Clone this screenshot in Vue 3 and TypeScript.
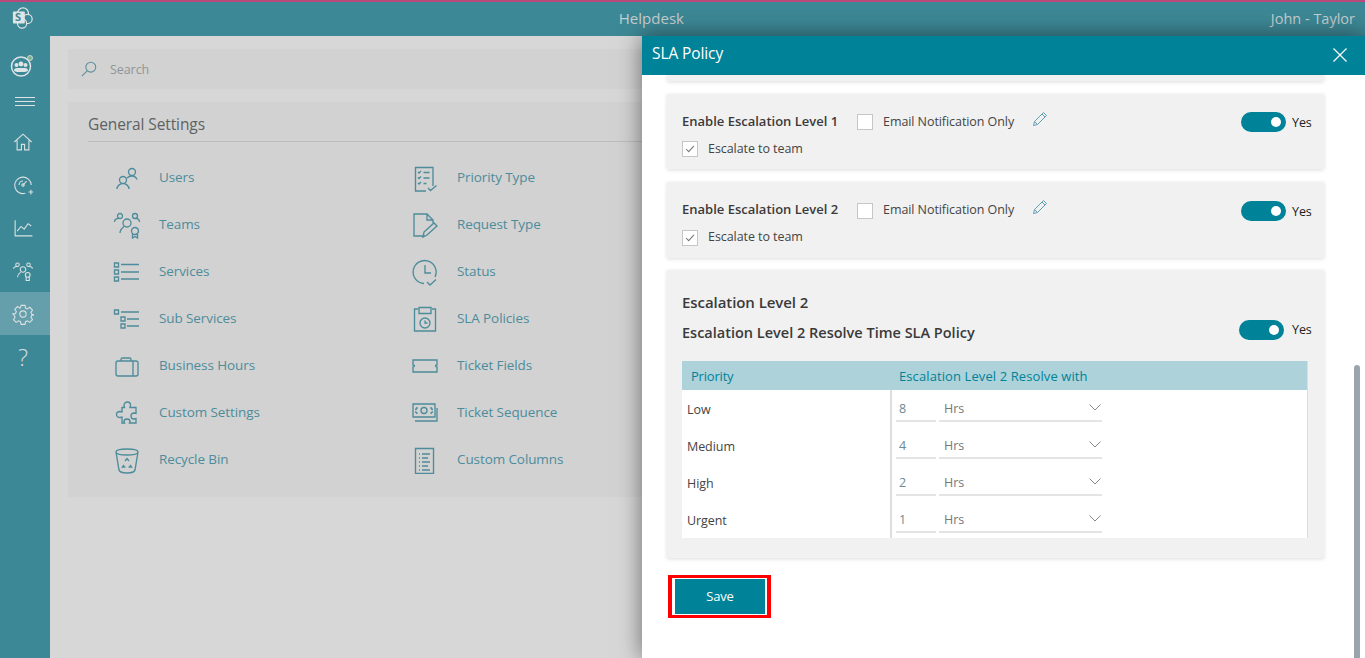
<script setup lang="ts">
/**
 * Helpdesk settings page with the SLA Policy side panel open.
 * Icons are plain stroked paths on a 28x28 box.
 */

interface SettingItem {
  label: string;
  icon: string;
}

interface PriorityRow {
  label: string;
  value: string;
}

const circle = (cx: number, cy: number, r: number): string =>
  `M${cx - r} ${cy}a${r} ${r} 0 1 0 ${r * 2} 0a${r} ${r} 0 1 0 ${-r * 2} 0`;

const navIcons: string[] = [
  // home
  'M3 14 14 4l11 10M6.500 12v12h5.500v-7h4v7h5.500V12',
  // gauge with plus
  `M17 24.500A10.500 10.500 0 1 1 24.500 14M14 14l4.500-5M9 14a5 5 0 0 1 5-5M21 23h6M24 20v6${circle(14, 14, 1.5)}`,
  // chart
  'M4 4v20h22M6.500 18l5-6 4 3.500 5-7 4 3',
  // teams
  `${circle(14, 12, 3.5)}${circle(7, 6, 2.2)}${circle(21, 6, 2.2)}M2 11c0-2 2-3 5-2.500M26 11c0-2-2-3-5-2.500M7 22c0-3 2-5 4-6.500${circle(20, 19, 3)}M18 22v4h4v-4`
];

const leftItems: SettingItem[] = [
  { label: 'Users', icon: `${circle(19, 8, 3.5)}${circle(10, 16, 3.5)}M14 14c1-1 3-2 5-2s4 1 5 3.500M4 25c0-3 3-5.500 6-5.500s6 2.500 6 5.500` },
  { label: 'Teams', icon: `${circle(14, 12, 4)}${circle(7, 5, 2.5)}${circle(22, 5, 2.5)}M1.500 11c0-3 2.500-4 5.500-3.500M26.500 11c0-3-2.500-4-5.500-3.500M7 22c0-3 2-5 4-6.500${circle(22, 20, 3.5)}M19.500 23v4l2.500-1.500 2.500 1.500v-4` },
  { label: 'Services', icon: 'M1.500 5h4v4h-4zM1.500 12h4v4h-4zM1.500 19h4v4h-4zM8 6.500h18M8 14h18M8 21h18' },
  { label: 'Sub Services', icon: 'M1.500 5h4v4h-4zM8 12h4v4H8zM8 19h4v4H8zM8 7h18M14 14h12M14 21h12' },
  { label: 'Business Hours', icon: 'M5 9h18a2 2 0 0 1 2 2v11a2 2 0 0 1-2 2H5a2 2 0 0 1-2-2V11a2 2 0 0 1 2-2zM8 9V7.500C8 6.500 8.500 6 9.500 6h7c1 0 1.500.5 1.500 1.500V9M20 9v15' },
  { label: 'Custom Settings', icon: 'M11 6.500c0-2 1.500-3.500 3.500-3.500s3 1.500 3 3.500l-.5 2h6v6l-2-.5c-2 0-3 1.500-3 3s1 3 3 3l2-.5v4.500h-6.500l.5-1.500c0-1.500-1-2.500-3-2.500s-3 1-3 2.500l.5 1.500H9v-6l-2 .5c-2 0-3.500-1-3.500-3s1.500-3 3.500-3l2 .5V8.500h2.500z' },
  { label: 'Recycle Bin', icon: 'M3 6c0-2 5-3 11-3s11 1 11 3-5 3-11 3S3 8 3 6zM3 6l3 18c.5 2 3 3 8 3s7.500-1 8-3l3-18M12 15l2-2.500 2 2.500M11 19l-1.500 2h3M17 19l1.500 2h-3' }
];

const rightItems: SettingItem[] = [
  { label: 'Priority Type', icon: 'M22 22V3.500H4.500V27H15M7 8l1 1 2-2M12.500 8.500h6M7 13.500l1 1 2-2M12.500 14h6M7 19l1 1 2-2M12.500 19.500h3M17 24l2.500 2.500 6-5' },
  { label: 'Request Type', icon: 'M14 25H3V3h13l6 6v3M16 3v6h6M12 26l1-5 10-9 3 3-10 9z' },
  { label: 'Status', icon: 'M24 19A11.500 11.500 0 1 0 13 25.500M14 7v8h6M16 24l3 3 6-5.500' },
  { label: 'SLA Policies', icon: 'M7 4H3.500v22h21V4H21M8 2.500h12v6H8z' + circle(14, 18, 5) + 'M14 15.500V18h2.500' },
  { label: 'Ticket Fields', icon: 'M2 8h24v5c-1 .2-1.500.5-1.500 1s.5.8 1.500 1v5H2v-5c1-.2 1.500-.5 1.500-1S3 13.200 2 13z' },
  { label: 'Ticket Sequence', icon: 'M2 5h22v13H2zM26 9v13H4M6 8c0 1.500-1 2.500-2 2.500M20 8c0 1.500 1 2.500 2 2.500M6 15c0-1.500-1-2-2-2M20 15c0-1.500 1-2 2-2' + circle(13, 11.5, 3) },
  { label: 'Custom Columns', icon: 'M4.500 2.500h18v25h-18zM8 8h1M11 8h8M8 12h1M11 12h6M8 16h1M11 16h8M8 20h1M11 20h6M8 24h1M11 24h8' }
];

const escalationLevels: number[] = [1, 2];

const priorityRows: PriorityRow[] = [
  { label: 'Low', value: '8' },
  { label: 'Medium', value: '4' },
  { label: 'High', value: '2' },
  { label: 'Urgent', value: '1' }
];
</script>

<template>
  <div class="page">
    <aside class="sidebar">
      <div class="logo">
        <svg class="logo-mark" viewBox="0 0 24 24">
          <circle cx="12" cy="7" r="6" />
          <circle cx="17" cy="13" r="5" />
          <circle cx="11" cy="18" r="5" />
          <rect x="1" y="5" width="13" height="13" rx="1" />
        </svg>
        <span class="logo-letter">S</span>
      </div>

      <div class="group-btn">
        <svg viewBox="0 0 24 24" width="24" height="24">
          <circle class="line" cx="11" cy="12.500" r="9.500" />
          <circle class="solid" cx="6.500" cy="11" r="2" />
          <circle class="solid" cx="15.500" cy="11" r="2" />
          <circle class="solid" cx="11" cy="10" r="2.400" />
          <path class="solid" d="M4 17c0-2 1-3 3-3h8c2 0 3 1 3 3l-3 1H7z" />
          <circle class="dot" cx="20" cy="4" r="2.500" />
        </svg>
      </div>

      <div class="burger"><span /><span /><span /></div>

      <nav class="nav">
        <div v-for="(d, idx) in navIcons" :key="idx" class="nav-item">
          <svg viewBox="0 0 28 28" width="22" height="22"><path :d="d" /></svg>
        </div>
        <div class="nav-item active">
          <svg viewBox="0 0 28 28" width="22" height="22">
            <circle cx="14" cy="14" r="4" />
            <path d="M11.500 3h5l.7 3.500 2.400 1 3-2 3.500 3.500-2 3 1 2.400 3.500.7v0l-3.500.7-1 2.400 2 3-3.500 3.500-3-2-2.400 1-.7 3.500h-5l-.7-3.500-2.400-1-3 2-3.500-3.500 2-3-1-2.400L1 14l3.500-.7 1-2.400-2-3L7 4.500l3 2 .8-.3z" />
          </svg>
        </div>
        <div class="nav-item help">?</div>
      </nav>
    </aside>

    <div class="main">
      <header class="topbar">
        <div class="app-title">Helpdesk</div>
        <div class="user">John - Taylor</div>
      </header>

      <div class="content">
        <div class="search">
          <svg viewBox="0 0 20 20" width="18" height="18">
            <circle cx="12" cy="8" r="5.500" />
            <path d="M8 12 2 18" />
          </svg>
          <span>Search</span>
        </div>

        <section class="settings">
          <h2>General Settings</h2>
          <div class="settings-grid">
            <ul class="settings-col">
              <li v-for="item in leftItems" :key="item.label">
                <svg viewBox="0 0 28 28" width="28" height="28"><path :d="item.icon" /></svg>
                <span>{{ item.label }}</span>
              </li>
            </ul>
            <ul class="settings-col">
              <li v-for="item in rightItems" :key="item.label">
                <svg viewBox="0 0 28 28" width="28" height="28"><path :d="item.icon" /></svg>
                <span>{{ item.label }}</span>
              </li>
            </ul>
          </div>
        </section>
      </div>
    </div>

    <!-- SLA Policy side panel -->
    <div class="panel">
      <div class="panel-head">
        <span class="panel-title">SLA Policy</span>
        <svg viewBox="0 0 14 14" width="14" height="14"><path d="M.5.500l13 13M13.500.500l-13 13" /></svg>
      </div>

      <div class="panel-body">
        <div class="card card-cut" />

        <div
          v-for="level in escalationLevels"
          :key="level"
          class="card level-card"
          :class="{ second: level === 2 }"
        >
          <div class="level-row">
            <strong class="level-name">Enable Escalation Level {{ level }}</strong>
            <span class="checkbox" />
            <span class="check-label">Email Notification Only</span>
            <svg class="pencil" viewBox="0 0 16 16" width="16" height="16">
              <path d="M1.500 14.500l1-4L11.500 1.500l3 3-9 9zM10 3l3 3M2.500 10.500l3 3" />
            </svg>
            <div class="switch-wrap">
              <span class="switch" /><span class="yes">Yes</span>
            </div>
          </div>
          <div class="team-row">
            <span class="checkbox checked">
              <svg viewBox="0 0 16 16" width="14" height="14"><path d="M3.500 8l3 3 6-6.500" /></svg>
            </span>
            <span class="check-label">Escalate to team</span>
          </div>
        </div>

        <div class="card resolve-card">
          <h3>Escalation Level 2</h3>
          <div class="resolve-row">
            <strong class="resolve-name">Escalation Level 2 Resolve Time SLA Policy</strong>
            <div class="switch-wrap">
              <span class="switch" /><span class="yes wide">Yes</span>
            </div>
          </div>

          <div class="table">
            <div class="table-head">
              <span>Priority</span>
              <span class="resolve-with">Escalation Level 2 Resolve with</span>
            </div>
            <div v-for="row in priorityRows" :key="row.label" class="table-row">
              <div class="cell-label">{{ row.label }}</div>
              <div class="cell-values">
                <div class="num-input">{{ row.value }}</div>
                <div class="select">
                  <span>Hrs</span>
                  <svg viewBox="0 0 12 7" width="12" height="7"><path d="M.5.500 6 6l5.500-5.500" /></svg>
                </div>
              </div>
            </div>
          </div>
        </div>

        <div class="save-outline">
          <button class="save-btn" type="button">Save</button>
        </div>
      </div>

      <div class="scroll-thumb" />
    </div>
  </div>
</template>

<style scoped>
.page {
  display: flex;
  height: 658px;
  overflow: hidden;
  position: relative;
  background: #d7d7d7;
  font-family: "Open Sans", "Noto Sans", sans-serif;
  font-size: 12.5px;
  letter-spacing: -0.07px;
  color: #333;
}

/* Sidebar */
.sidebar {
  width: 50px;
  flex-shrink: 0;
  background: #3d8896;
  border-top: 2px solid #b9487c;
  display: flex;
  flex-direction: column;
}

.logo {
  height: 32px;
  display: flex;
  align-items: center;
  justify-content: center;
  position: relative;
  margin-left: -5px;
}

.logo-mark {
  width: 22px;
  height: 22px;
}

.logo-mark circle {
  fill: #3d8896;
  stroke: #dfe5e6;
  stroke-width: 1.3;
}

.logo-mark rect {
  fill: #dfe5e6;
}

.logo-letter {
  position: absolute;
  left: 20px;
  top: 7px;
  font-size: 11px;
  font-weight: 700;
  color: #3d8896;
}

.group-btn {
  height: 46px;
  margin-top: 9px;
  display: flex;
  align-items: center;
  justify-content: center;
  margin-left: -6px;
}

.group-btn .line {
  fill: none;
  stroke: #dfe5e6;
  stroke-width: 1.5;
}

.group-btn .solid {
  fill: #dfe5e6;
}

.group-btn .dot {
  fill: #7fb08c;
  stroke: #dfe5e6;
  stroke-width: 0.8;
}

.burger {
  height: 22px;
  margin-top: 1px;
  display: flex;
  flex-direction: column;
  justify-content: center;
  gap: 3px;
  padding: 0 15px;
}

.burger span {
  height: 1px;
  background: #dfe5e6;
}

.nav {
  margin-top: 8px;
}

.nav-item {
  height: 43px;
  display: flex;
  align-items: center;
  justify-content: center;
  margin-left: -4px;
}

.nav-item svg {
  fill: none;
  stroke: #d9e1e2;
  stroke-width: 1.4;
}

.nav-item.active {
  background: #669fac;
  margin-left: 0;
  padding-right: 4px;
}

.nav-item.help {
  font-size: 23px;
  font-weight: 300;
  color: #d9e1e2;
}

/* Main area behind the panel */
.main {
  flex: 1;
  min-width: 0;
}

.topbar {
  height: 34px;
  background: #3d8896;
  border-top: 2px solid #b9487c;
  box-sizing: content-box;
  display: flex;
  align-items: center;
  color: #c4cfd1;
}

.app-title {
  flex: 1;
  text-align: center;
  font-size: 15px;
  letter-spacing: 0.02px;
  padding: 0 18px 3px 0;
}

.user {
  font-size: 14.5px;
  letter-spacing: 0;
  padding: 0 10px 1px 0;
}

.content {
  padding: 13px 18px;
}

.search {
  height: 40px;
  background: #d2d2d2;
  display: flex;
  align-items: center;
  gap: 12px;
  padding-left: 12px;
  color: #8f9596;
  font-size: 12.5px;
}

.search svg {
  fill: none;
  stroke: #5b8f9c;
  stroke-width: 1.2;
}

.settings {
  margin-top: 13px;
  height: 395px;
  background: #d2d2d2;
  padding: 0 20px;
}

.settings h2 {
  margin: 0;
  height: 39px;
  line-height: 44px;
  font-size: 15.5px;
  font-weight: 400;
  letter-spacing: -0.1px;
  color: #5d6364;
  border-bottom: 1px solid #bdbdbd;
}

.settings-grid {
  display: flex;
  padding: 12px 0 0 25px;
}

.settings-col {
  list-style: none;
  margin: 0;
  padding: 0;
  width: 298px;
}

.settings-col li {
  height: 47px;
  display: flex;
  align-items: center;
  gap: 18px;
  color: #4d8c9b;
  font-size: 13.5px;
  letter-spacing: -0.1px;
}

.settings-col span {
  margin-top: -2px;
}

.settings-col svg {
  fill: none;
  stroke: #4d8c9b;
  stroke-width: 1.35;
  flex-shrink: 0;
}

/* Panel */
.panel {
  position: absolute;
  top: 36px;
  left: 642px;
  right: 0;
  bottom: 0;
  background: #fff;
  box-shadow: 0 0 22px rgba(0, 0, 0, 0.5);
}

.panel-head {
  height: 39px;
  box-sizing: border-box;
  background: #008299;
  display: flex;
  align-items: center;
  justify-content: space-between;
  padding: 0 18px 2px 10px;
  color: #fff;
  font-size: 15.5px;
  letter-spacing: -0.1px;
}

.panel-title {
  margin-top: -3px;
}

.panel-head svg {
  fill: none;
  stroke: #fff;
  stroke-width: 1.2;
}

.panel-body {
  padding: 0 41px 0 25px;
}

.card {
  background: #f1f1f1;
  box-shadow: 0 1px 4px rgba(0, 0, 0, 0.14);
  margin-bottom: 13px;
}

.card-cut {
  height: 6px;
}

.level-card {
  height: 75px;
  box-sizing: border-box;
  padding: 18px 12px 0 15px;
}

.level-card.second {
  height: 76px;
  padding-top: 19px;
  margin-bottom: 12px;
}

.level-row {
  height: 20px;
  display: flex;
  align-items: center;
}

.level-name {
  width: 175px;
  flex-shrink: 0;
  font-size: 13px;
  font-weight: 600;
  letter-spacing: 0;
  color: #3a3a3a;
  margin-top: -2px;
}

.second .level-name {
  margin-top: -4px;
}

.checkbox {
  width: 14px;
  height: 14px;
  flex-shrink: 0;
  background: #fff;
  border: 1px solid #c6c6c6;
  display: inline-flex;
  align-items: center;
  justify-content: center;
}

.check-label {
  color: #444;
  margin: -2px 0 0 10px;
}

.second .check-label {
  margin-top: -4px;
}

.pencil {
  fill: none;
  stroke: #5f9fb0;
  stroke-width: 1;
  margin: 0 0 7px 18px;
}

.second .pencil {
  margin-bottom: 9px;
}

.switch-wrap {
  margin-left: auto;
  display: flex;
  align-items: center;
  gap: 6px;
}

.switch {
  width: 45px;
  height: 20px;
  border-radius: 10px;
  background: #008299;
  position: relative;
}

.switch::after {
  content: "";
  position: absolute;
  right: 5px;
  top: 5px;
  width: 10px;
  height: 10px;
  border-radius: 50%;
  background: #fff;
}

.yes {
  color: #222;
  width: 20px;
}

.yes.wide {
  margin-left: 2px;
}

.team-row {
  display: flex;
  align-items: center;
  margin-top: 9px;
}

.checked svg {
  fill: none;
  stroke: #777;
  stroke-width: 1.2;
}

.resolve-card {
  height: 288px;
  box-sizing: border-box;
  padding: 0 16px 0 15px;
  margin-bottom: 17px;
}

.resolve-card h3 {
  margin: 0;
  padding-top: 20px;
  height: 47px;
  box-sizing: border-box;
  font-size: 15px;
  font-weight: 600;
  color: #3a3a3a;
  line-height: 24px;
}

.resolve-row {
  height: 25px;
  display: flex;
  align-items: center;
  margin-right: -4px;
}

.resolve-name {
  font-size: 14.5px;
  font-weight: 600;
  letter-spacing: 0;
  color: #3a3a3a;
  margin-top: 6px;
}

.table {
  margin-top: 19px;
  background: #fff;
  border-right: 1px solid #dcdcdc;
}

.table-head {
  height: 29px;
  background: #add2d9;
  display: flex;
  align-items: center;
  color: #008299;
  font-size: 13px;
  letter-spacing: -0.2px;
}

.table-head span:first-child {
  width: 217px;
  padding-left: 9px;
  box-sizing: border-box;
}

.table-head .resolve-with {
  letter-spacing: 0.1px;
}

.table-row {
  height: 37px;
  display: flex;
}

.cell-label {
  width: 208px;
  padding: 11px 0 0 5px;
  box-sizing: border-box;
  color: #444;
  line-height: 18px;
}

.cell-values {
  border-left: 2px solid #dedede;
  padding-left: 4px;
  display: flex;
  gap: 3px;
}

.num-input {
  width: 40px;
  height: 32px;
  box-sizing: border-box;
  padding: 10px 0 0 3px;
  border-bottom: 2px solid #e4e4e4;
  color: #6b8a92;
  line-height: 18px;
}

.select {
  width: 163px;
  height: 32px;
  box-sizing: border-box;
  padding: 10px 1px 0 5px;
  border-bottom: 2px solid #e4e4e4;
  display: flex;
  justify-content: space-between;
  color: #777;
  line-height: 18px;
}

.select svg {
  fill: none;
  stroke: #888;
  stroke-width: 1;
  margin-top: 4px;
}

.save-outline {
  display: inline-block;
  border: 3px solid #ff0000;
  border-left-width: 4px;
  border-right-width: 4px;
  padding: 1px 2px 1px 3px;
  margin-left: 1px;
}

.save-btn {
  display: block;
  width: 90px;
  height: 35px;
  border: none;
  background: #008299;
  color: #fff;
  font-family: inherit;
  font-size: 13px;
  letter-spacing: -0.2px;
  padding: 0 0 2px;
}

.scroll-thumb {
  position: absolute;
  left: 712px;
  top: 329px;
  bottom: 0;
  width: 6px;
  border-radius: 3px 3px 0 0;
  background: #9aa5ac;
}
</style>

<style>
html,
body {
  margin: 0;
  overflow: hidden;
}
</style>
